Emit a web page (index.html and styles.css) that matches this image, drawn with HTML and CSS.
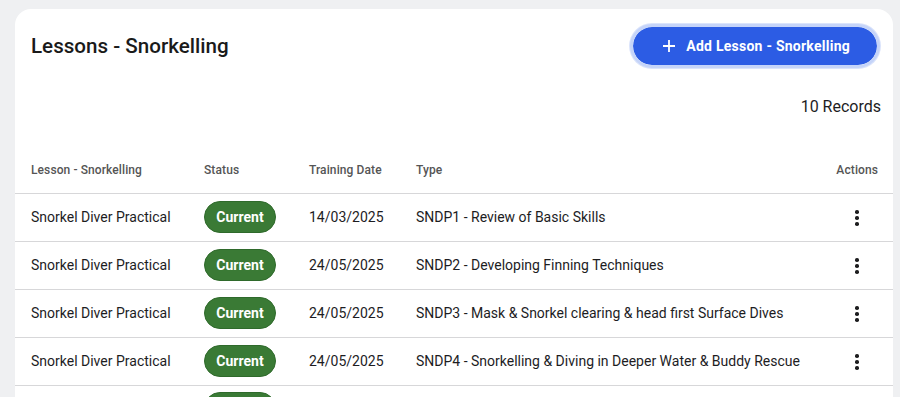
FILE: index.html
```html
<!DOCTYPE html>
<html lang="en">
<head>
  <meta charset="UTF-8">
  <meta name="viewport" content="width=device-width, initial-scale=1.0">
  <title>Lessons - Snorkelling</title>
  <link rel="stylesheet" href="styles.css">
</head>
<body>
  <div class="card">
    <div class="card-head">
      <h1>Lessons - Snorkelling</h1>
      <button class="add-btn">
        <svg width="14" height="14" viewBox="0 0 14 14"><path d="M7 1v12M1 7h12" stroke="#fff" stroke-width="1.8" fill="none"/></svg>
        Add Lesson - Snorkelling
      </button>
    </div>

    <div class="records">10 Records</div>

    <!-- lessons table -->
    <table class="lessons">
      <thead>
        <tr>
          <th class="col-lesson">Lesson - Snorkelling</th>
          <th class="col-status">Status</th>
          <th class="col-date">Training Date</th>
          <th>Type</th>
          <th class="col-actions">Actions</th>
        </tr>
      </thead>
      <tbody>
        <tr>
          <td>Snorkel Diver Practical</td>
          <td><span class="chip">Current</span></td>
          <td>14/03/2025</td>
          <td>SNDP1 - Review of Basic Skills</td>
          <td class="col-actions"><span class="dots"><i></i><i></i><i></i></span></td>
        </tr>
        <tr>
          <td>Snorkel Diver Practical</td>
          <td><span class="chip">Current</span></td>
          <td>24/05/2025</td>
          <td>SNDP2 - Developing Finning Techniques</td>
          <td class="col-actions"><span class="dots"><i></i><i></i><i></i></span></td>
        </tr>
        <tr>
          <td>Snorkel Diver Practical</td>
          <td><span class="chip">Current</span></td>
          <td>24/05/2025</td>
          <td>SNDP3 - Mask &amp; Snorkel clearing &amp; head first Surface Dives</td>
          <td class="col-actions"><span class="dots"><i></i><i></i><i></i></span></td>
        </tr>
        <tr>
          <td>Snorkel Diver Practical</td>
          <td><span class="chip">Current</span></td>
          <td>24/05/2025</td>
          <td>SNDP4 - Snorkelling &amp; Diving in Deeper Water &amp; Buddy Rescue</td>
          <td class="col-actions"><span class="dots"><i></i><i></i><i></i></span></td>
        </tr>
        <tr class="last-row">
          <td></td>
          <td><span class="chip"></span></td>
          <td></td>
          <td></td>
          <td></td>
        </tr>
      </tbody>
    </table>
  </div>
</body>
</html>
```

FILE: styles.css
```css
* {
  margin: 0;
  padding: 0;
  box-sizing: border-box;
}

body {
  font-family: Roboto, "Liberation Sans", sans-serif;
  background-color: #eff0f2;
  color: #1d1d1f;
  padding: 9px 7px 0 15px;
  overflow: hidden;
}

.card {
  background-color: #fff;
  border-radius: 16px 16px 0 0;
  min-height: 600px;
}

.card-head {
  display: flex;
  justify-content: space-between;
  align-items: center;
  padding: 15px 13px 0 16px;
}

.card-head h1 {
  font-size: 20.6px;
  font-weight: 500;
  color: #1a1a1a;
  margin-top: -1px;
}

.add-btn {
  display: flex;
  align-items: center;
  gap: 10px;
  height: 44px;
  padding: 0 27px 0 29px;
  border: 3px solid #c5d4f9;
  border-radius: 22px;
  background-color: #2c5ce4;
  background-clip: padding-box;
  box-shadow: 0 0 0 1px #dbe4fb;
  color: #fff;
  font-family: inherit;
  font-size: 14px;
  font-weight: 700;
  letter-spacing: 0.25px;
}

.records {
  text-align: right;
  font-size: 16px;
  padding: 27px 12px 0 0;
  line-height: 24px;
}

.lessons {
  width: 100%;
  border-collapse: collapse;
  margin-top: 35px;
  font-size: 14px;
}

.lessons th {
  text-align: left;
  font-size: 12px;
  font-weight: 500;
  letter-spacing: 0.1px;
  color: #555;
  height: 39px;
  vertical-align: top;
  padding-top: 9px;
  border-bottom: 1px solid #d7d7d9;
}

.lessons td {
  height: 48px;
  border-bottom: 1px solid #d7d7d9;
  color: #1d1d1f;
}

.lessons th:first-child,
.lessons td:first-child {
  padding-left: 16px;
}

.col-lesson { width: 189px; }
.col-status { width: 105px; }
.col-date { width: 107px; }

.lessons .col-actions {
  text-align: right;
  padding-right: 15px;
  width: 90px;
}

.lessons td.col-actions {
  padding-right: 24px;
}

.chip {
  display: inline-flex;
  align-items: center;
  justify-content: center;
  width: 72px;
  height: 32px;
  border-radius: 16px;
  background-color: #3a7a35;
  border: 1px solid #2f6a2b;
  color: #fff;
  font-weight: 700;
  font-size: 14px;
}

.dots {
  display: inline-flex;
  flex-direction: column;
  gap: 2.5px;
  width: 24px;
  align-items: center;
  vertical-align: middle;
}

.dots i {
  display: block;
  width: 3.5px;
  height: 3.5px;
  border-radius: 50%;
  background-color: #1d1d1f;
}
```
